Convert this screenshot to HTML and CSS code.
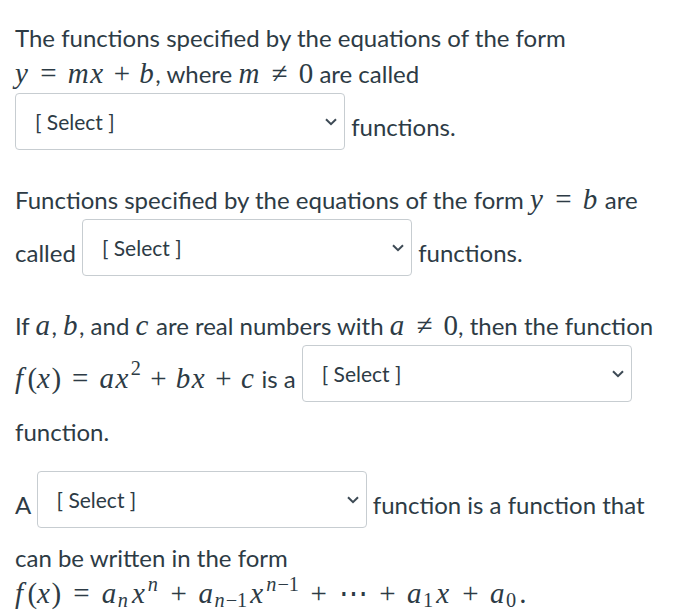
FILE: index.html
```html
<!DOCTYPE html>
<html lang="en">
<head>
<meta charset="utf-8">
<title>Quiz</title>
<link rel="stylesheet" href="styles.css">
</head>
<body>
<div class="quiz">
  <p class="q">The functions specified by the equations of the form <span class="m"><i>y</i><span class="rel">=</span><i>m</i><i>x</i><span class="bin">+</span><i>b</i></span>, where <span class="m"><i>m</i><span class="rel">≠</span>0</span> are called <span class="sel"><span class="sel-text">[ Select ]</span><svg class="chev" width="12" height="8" viewBox="0 0 12 8"><path d="M1 1.2 L6 6.2 L11 1.2" fill="none" stroke="#3d4a55" stroke-width="2"/></svg></span> functions.</p>

  <p class="q">Functions specified by the equations of the form <span class="m"><i>y</i><span class="rel">=</span><i>b</i></span> are called <span class="sel"><span class="sel-text">[ Select ]</span><svg class="chev" width="12" height="8" viewBox="0 0 12 8"><path d="M1 1.2 L6 6.2 L11 1.2" fill="none" stroke="#3d4a55" stroke-width="2"/></svg></span> functions.</p>

  <p class="q">If <span class="m"><i>a</i></span>, <span class="m"><i>b</i></span>, and <span class="m"><i>c</i></span> are real numbers with <span class="m"><i>a</i><span class="rel">≠</span>0</span>, then the function <span class="m"><i class="fn">f</i>(<i>x</i>)<span class="rel">=</span><i>a</i><i>x</i><sup>2</sup><span class="bin">+</span><i>b</i><i>x</i><span class="bin">+</span><i>c</i></span> is a <span class="sel"><span class="sel-text">[ Select ]</span><svg class="chev" width="12" height="8" viewBox="0 0 12 8"><path d="M1 1.2 L6 6.2 L11 1.2" fill="none" stroke="#3d4a55" stroke-width="2"/></svg></span> function.</p>

  <p class="q">A <span class="sel"><span class="sel-text">[ Select ]</span><svg class="chev" width="12" height="8" viewBox="0 0 12 8"><path d="M1 1.2 L6 6.2 L11 1.2" fill="none" stroke="#3d4a55" stroke-width="2"/></svg></span> function is a function that can be written in the form <span class="m m-wide"><i class="fn">f</i>(<i>x</i>)<span class="rel">=</span><i>a</i><sub><i>n</i></sub><i>x</i><sup><i>n</i></sup><span class="bin">+</span><i>a</i><sub><i>n</i>−1</sub><i>x</i><sup><i>n</i>−1</sup><span class="bin">+</span>⋯<span class="bin">+</span><i>a</i><sub>1</sub><i>x</i><span class="bin">+</span><i>a</i><sub>0</sub>.</span></p>
</div>
</body>
</html>
```

FILE: styles.css
```css
html, body {
  margin: 0;
  padding: 0;
  background: #ffffff;
}

.quiz {
  padding: 20px 10px 0 15px;
  font-family: Lato, "Noto Sans", sans-serif;
  font-size: 24px;
  line-height: 36px;
  color: #2d3b45;
}

.q {
  margin: 0 0 20px 0;
}

.m {
  font-family: "Liberation Serif", "DejaVu Serif", serif;
  font-size: 29px;
  line-height: 1;
  white-space: nowrap;
}

.m i {
  font-style: italic;
  letter-spacing: 0.05em;
}

.m .fn {
  margin-right: 0.1em;
}

.rel {
  margin: 0 0.38em;
}

.bin {
  margin: 0 0.32em;
}

.m sup,
.m sub {
  font-size: 0.7em;
  line-height: 0;
}

.m sup {
  vertical-align: 0.6em;
  margin-left: 0.05em;
}

.m sub {
  vertical-align: -0.22em;
  margin-right: 0.08em;
}

.m-wide .rel {
  margin: 0 0.42em;
}

.m-wide .bin {
  margin: 0 0.4em;
}

.m-wide sub {
  margin-right: 0.15em;
}

.m-wide sup {
  margin-left: 0.08em;
}

.sel {
  display: inline-flex;
  align-items: center;
  justify-content: space-between;
  box-sizing: border-box;
  width: 330px;
  height: 57px;
  margin: 1px 0 12px 0;
  padding: 0 7px 0 19px;
  border: 1px solid #c7cdd1;
  border-radius: 4px;
  background: #ffffff;
  vertical-align: 6px;
  font-size: 21px;
  line-height: 24px;
  color: #2d3b45;
}

.chev {
  display: block;
}
```
